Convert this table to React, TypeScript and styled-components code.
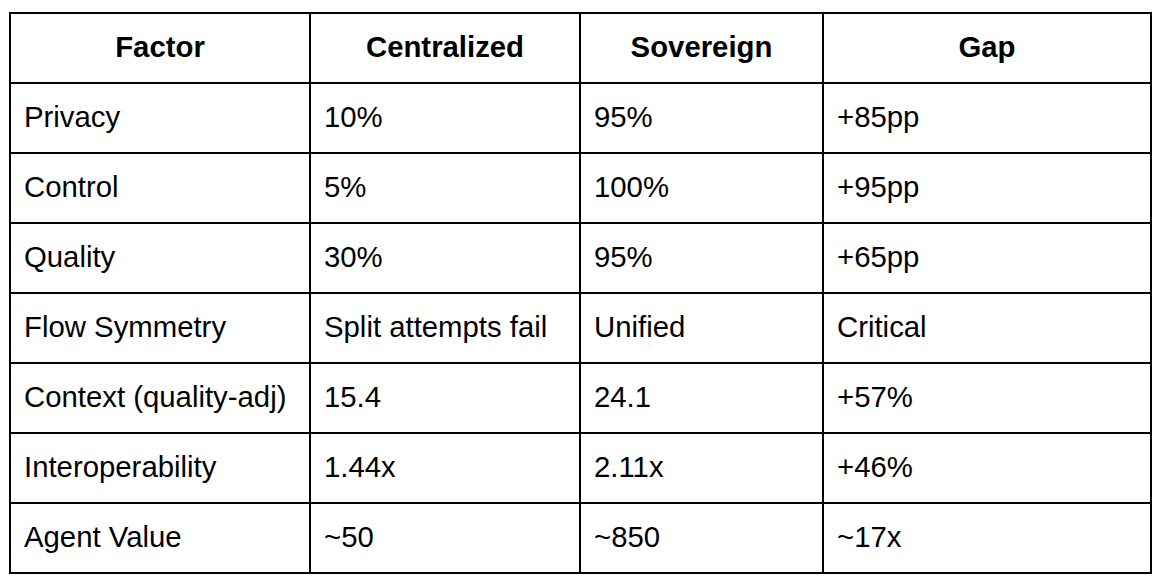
import { createGlobalStyle, styled } from "styled-components";

type Row = [string, string, string, string];

const header: Row = ["Factor", "Centralized", "Sovereign", "Gap"];

const rows: Row[] = [
  ["Privacy", "10%", "95%", "+85pp"],
  ["Control", "5%", "100%", "+95pp"],
  ["Quality", "30%", "95%", "+65pp"],
  ["Flow Symmetry", "Split attempts fail", "Unified", "Critical"],
  ["Context (quality-adj)", "15.4", "24.1", "+57%"],
  ["Interoperability", "1.44x", "2.11x", "+46%"],
  ["Agent Value", "~50", "~850", "~17x"],
];

const columnWidths = [300, 270, 243, 328];

const App = () => {
  return (
    <Page>
      <GlobalStyle />
      <Table>
        <colgroup>
          {columnWidths.map((w, i) => (
            <col key={i} style={{ width: w }} />
          ))}
        </colgroup>
        <thead>
          <Row>
            {header.map((h) => (
              <HeadCell key={h}>{h}</HeadCell>
            ))}
          </Row>
        </thead>
        <tbody>
          {rows.map((r) => (
            <Row key={r[0]}>
              {r.map((c, i) => (
                <Cell key={i}>{c}</Cell>
              ))}
            </Row>
          ))}
        </tbody>
      </Table>
    </Page>
  );
};

const GlobalStyle = createGlobalStyle`
  html, body {
    margin: 0;
    padding: 0;
    background: #ffffff;
  }
  body {
    font-family: "Liberation Sans", Arial, sans-serif;
    color: #000000;
  }
`;

const Page = styled.div`
  padding: 12px 0 0 9px;
`;

const Table = styled.table`
  border-collapse: collapse;
  table-layout: fixed;
  width: 1141px;
  font-size: 29.33px;
  line-height: 1.15;
`;

const Row = styled.tr`
  height: 70px;
`;

const Cell = styled.td`
  border: 2px solid #000000;
  padding: 0 13px 3px;
  vertical-align: middle;
  text-align: left;
  white-space: nowrap;
  font-weight: 400;
`;

const HeadCell = styled(Cell).attrs({ as: "th" })`
  text-align: center;
  font-weight: 700;
`;

export default App;
